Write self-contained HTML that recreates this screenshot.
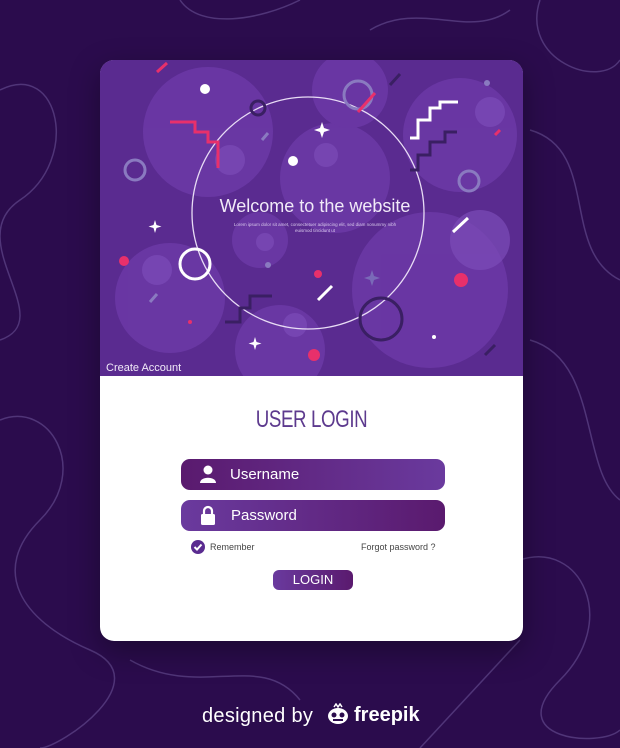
<!DOCTYPE html>
<html><head><meta charset="utf-8"><style>
html,body{margin:0;padding:0}
body{width:620px;height:748px;background:#2b0c4d;position:relative;overflow:hidden;font-family:"Liberation Sans",sans-serif}
.card{position:absolute;left:100px;top:60px;width:423px;height:581px;border-radius:14px;background:#fff;overflow:hidden;box-shadow:0 10px 30px rgba(0,0,0,.35)}
.top{position:absolute;left:0;top:0;width:423px;height:316px;background:#5b2d91}
.field{position:absolute;left:81px;width:264px;height:31px;border-radius:9px;color:#fff;font-size:15px;line-height:31px}
.u{top:399px;background:linear-gradient(90deg,#5a1a6e,#6a3a9e)}
.p{top:440px;background:linear-gradient(90deg,#6a3a9e,#5a1a6e)}
</style></head><body>
<svg width="620" height="748" style="position:absolute;left:0;top:0" fill="none" stroke="#503578" stroke-width="1.5">
<path d="M0 90 C60 60 80 160 20 200 S60 320 0 340"/>
<path d="M0 420 C50 400 90 470 40 520 S20 620 90 650 S60 748 40 748"/>
<path d="M540 0 C520 60 600 90 620 60"/>
<path d="M530 130 C600 150 560 250 620 280"/>
<path d="M530 340 C600 360 580 470 620 500"/>
<path d="M520 560 C580 540 620 620 560 680 S600 748 620 730"/>
<path d="M180 0 C200 30 260 20 300 0"/>
<path d="M370 30 C420 0 470 40 510 10"/>
<path d="M130 660 C200 700 260 650 300 700"/>
<path d="M420 748 L520 640"/>
</svg>
<div class="card">
<svg class="top" width="423" height="316" viewBox="0 0 423 316">
<rect width="423" height="316" fill="#5a2b90"/>
<g fill="#6d3aa8" opacity=".8">
<circle cx="108" cy="72" r="65"/><circle cx="235" cy="118" r="55"/><circle cx="360" cy="75" r="57"/>
<circle cx="70" cy="238" r="55"/><circle cx="180" cy="290" r="45"/><circle cx="330" cy="230" r="78"/>
<circle cx="160" cy="180" r="28"/><circle cx="250" cy="30" r="38"/>
</g>
<g fill="#7c4cb8" opacity=".7"><circle cx="390" cy="52" r="15"/><circle cx="130" cy="100" r="15"/><circle cx="226" cy="95" r="12"/><circle cx="57" cy="210" r="15"/><circle cx="195" cy="265" r="12"/><circle cx="165" cy="182" r="9"/><circle cx="380" cy="180" r="30"/></g>
<circle cx="208" cy="153" r="116" stroke="#e8dcf5" stroke-width="1.3" fill="none"/>
<g fill="none" stroke-width="3">
<circle cx="258" cy="35" r="14" stroke="#8a7ac0"/><circle cx="35" cy="110" r="10" stroke="#8a7ac0"/><circle cx="369" cy="121" r="10" stroke="#8a7ac0"/>
<circle cx="95" cy="204" r="15" stroke="#fff"/><circle cx="281" cy="259" r="21" stroke="#3a1f63"/><circle cx="158" cy="48" r="7" stroke="#3a1f63"/>
<path d="M70 62 L95 62 L95 72 L108 72 L108 82 L118 82 L118 108" stroke="#e8306b"/>
<path d="M310 78 L318 78 L318 60 L330 60 L330 48 L340 48 L340 42 L358 42" stroke="#fff"/>
<path d="M310 110 L318 110 L318 95 L330 95 L330 82 L345 82 L345 72 L357 72" stroke="#3a1f63"/>
<path d="M125 262 L140 262 L140 248 L150 248 L150 236 L172 236" stroke="#3a1f63"/>
<path d="M57 12 L67 3" stroke="#e8306b"/><path d="M258 52 L275 33" stroke="#e8306b"/><path d="M353 172 L368 158" stroke="#fff"/>
<path d="M218 240 L232 226" stroke="#fff"/><path d="M50 242 L57 234" stroke="#8a7ac0"/><path d="M162 80 L168 73" stroke="#8a7ac0"/>
<path d="M290 25 L300 14" stroke="#3a1f63"/><path d="M385 295 L395 285" stroke="#3a1f63"/><path d="M395 75 L400 70" stroke="#e8306b"/>
</g>
<g fill="#fff"><circle cx="105" cy="29" r="5"/><circle cx="193" cy="101" r="5"/><circle cx="334" cy="277" r="2"/></g>
<g fill="#e8306b"><circle cx="24" cy="201" r="5"/><circle cx="218" cy="214" r="4"/><circle cx="361" cy="220" r="7"/><circle cx="214" cy="295" r="6"/><circle cx="90" cy="262" r="2"/></g>
<g fill="#8a7ac0"><circle cx="168" cy="205" r="3"/><circle cx="387" cy="23" r="3"/></g>
<path d="M222 62 l2 6 6 2 -6 2 -2 6 -2 -6 -6 -2 6 -2z M55 160 l1.5 5 5 1.5 -5 1.5 -1.5 5 -1.5 -5 -5 -1.5 5 -1.5z M155 277 l1.5 5 5 1.5 -5 1.5 -1.5 5 -1.5 -5 -5 -1.5 5 -1.5z" fill="#fff"/>
<path d="M272 210 l2 6 6 2 -6 2 -2 6 -2 -6 -6 -2 6 -2z" fill="#7a6ab8"/>
<text x="215" y="152" text-anchor="middle" fill="#f1eaf8" font-size="18" font-family="Liberation Sans,sans-serif">Welcome to the website</text>
<text x="215" y="166" text-anchor="middle" fill="#d8c8ec" font-size="4.5" font-family="Liberation Sans,sans-serif">Lorem ipsum dolor sit amet, consectetuer adipiscing elit, sed diam nonummy nibh</text>
<text x="215" y="172" text-anchor="middle" fill="#d8c8ec" font-size="4.5" font-family="Liberation Sans,sans-serif">euismod tincidunt ut</text>
<text x="6" y="311" fill="#f1eaf8" font-size="11" font-family="Liberation Sans,sans-serif">Create Account</text>
</svg>
<div style="position:absolute;left:0;top:346px;width:423px;text-align:center;color:#5d3a8e;font-size:24px;transform:scaleX(.78);letter-spacing:-.5px">USER LOGIN</div>
<div class="field u"><svg width="16" height="18" style="position:absolute;left:19px;top:6px" viewBox="0 0 16 18" fill="#fff"><circle cx="8" cy="5" r="4.5"/><path d="M0 18 C0 11 16 11 16 18z"/></svg><span style="position:absolute;left:49px">Username</span></div>
<div class="field p"><svg width="16" height="20" style="position:absolute;left:19px;top:5px" viewBox="0 0 16 20"><path d="M4 9 V6 a4 4 0 0 1 8 0 V9" stroke="#fff" stroke-width="2.2" fill="none"/><rect x="1" y="9" width="14" height="11" rx="1.5" fill="#fff"/></svg><span style="position:absolute;left:50px">Password</span></div>
<svg width="14" height="14" style="position:absolute;left:91px;top:480px" viewBox="0 0 14 14"><circle cx="7" cy="7" r="7" fill="#5a2b90"/><path d="M3.5 7 L6 9.5 L10.5 4.5" stroke="#fff" stroke-width="2" fill="none"/></svg>
<div style="position:absolute;left:110px;top:482px;font-size:9px;color:#444">Remember</div>
<div style="position:absolute;left:261px;top:482px;font-size:9px;color:#444">Forgot password ?</div>
<div style="position:absolute;left:173px;top:510px;width:80px;height:20px;border-radius:6px;background:linear-gradient(90deg,#6a3a9e,#5a1a6e);color:#fff;font-size:13px;line-height:20px;text-align:center">LOGIN</div>
</div>
<div style="position:absolute;left:202px;top:705px;color:#fff;font-size:20px;letter-spacing:.3px">designed by</div>
<svg width="24" height="22" style="position:absolute;left:326px;top:703px" viewBox="0 0 24 22"><path d="M8 4 l2 -3 2 3 2 -3 2 3" stroke="#fff" stroke-width="1.5" fill="none"/><ellipse cx="12" cy="13" rx="10" ry="8" fill="#fff"/><circle cx="8" cy="12" r="2.5" fill="#2b0c4d"/><circle cx="16" cy="12" r="2.5" fill="#2b0c4d"/><rect x="7" y="16" width="10" height="2" fill="#2b0c4d"/></svg>
<div style="position:absolute;left:354px;top:704px;color:#fff;font-size:20px;font-weight:bold">freepik</div>
</body></html>
